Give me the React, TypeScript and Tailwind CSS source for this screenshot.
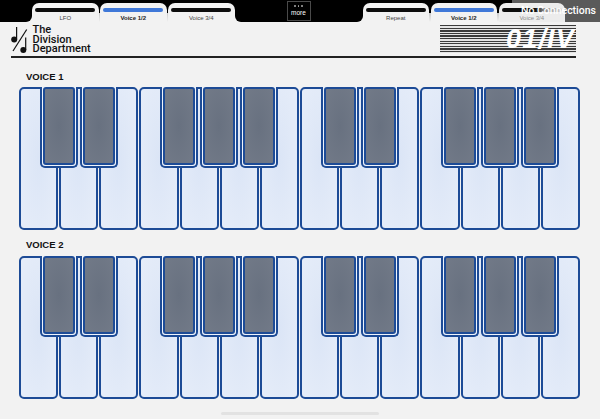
import React from 'react';

const leftTabs = [
  { id: 'lfo', label: 'LFO', active: false },
  { id: 'voice12', label: 'Voice 1/2', active: true },
  { id: 'voice34', label: 'Voice 3/4', active: false },
];

const rightTabs = [
  { id: 'repeat', label: 'Repeat', active: false },
  { id: 'voice12', label: 'Voice 1/2', active: true },
];

const blackKeys = [
  'left-[21px]',
  'left-[61px]',
  'left-[141px]',
  'left-[181px]',
  'left-[221px]',
  'left-[302px]',
  'left-[342px]',
  'left-[422px]',
  'left-[462px]',
  'left-[502px]',
];

const whiteKeys = Array.from({ length: 14 }, (_, i) => i);

const Tab = ({ label, active }: { label: string; active: boolean }) => (
  <div className="w-[66.5px] h-[19px] rounded-t-[7px] bg-[#f2f2f2] flex flex-col items-center pt-[5px]">
    <div className={`w-[60px] h-[3.5px] rounded-full ${active ? 'bg-[#3f78d8]' : 'bg-[#0c0c0c]'}`} />
    <span className={`mt-[2px] text-[6px] leading-[8px] ${active ? 'text-[#222] font-bold' : 'text-[#444]'}`}>{label}</span>
  </div>
);

const Keyboard = () => (
  <div className="relative h-[143px] flex gap-px">
    {whiteKeys.map((k) => (
      <div
        key={k}
        className="flex-1 rounded-[5px] border-2 border-[#1d4b96] bg-[radial-gradient(ellipse_at_center,#dbe5f6,#e6edf9)]"
      />
    ))}
    {blackKeys.map((pos) => (
      <div
        key={pos}
        className={`absolute top-0 ${pos} w-[38px] h-[81px] rounded-b-[5px] border-2 border-t-0 border-[#1d4b96] bg-[#eef3fb] px-px pb-px`}
      >
        <div className="h-full rounded-[3px] border-2 border-[#1d4b96] bg-[radial-gradient(ellipse_at_center,#687180,#727a88)]" />
      </div>
    ))}
  </div>
);

const App = () => {
  return (
    <div className="relative w-[600px] h-[419px] overflow-hidden bg-[#f2f2f2] font-['Liberation_Sans',sans-serif] flex flex-col">
      {/* Top bar */}
      <div className="h-[22px] flex shrink-0">
        <div className="w-[32px] bg-black rounded-br-[6px]" />
        <div className="flex gap-[1.5px] pt-[3px] bg-[linear-gradient(#000_60%,#c9c9c9_60%,#f2f2f2)]">
          {leftTabs.map((t) => (
            <Tab key={t.id} label={t.label} active={t.active} />
          ))}
        </div>
        <div className="w-[128px] bg-black rounded-b-[6px] flex justify-center pt-px">
          <div className="w-[24px] h-[20px] border border-[#4a4a4a] flex flex-col items-center pt-[3px]">
            <div className="flex gap-[2px]">
              <span className="w-[1.5px] h-[1.5px] rounded-full bg-[#aaa]" />
              <span className="w-[1.5px] h-[1.5px] rounded-full bg-[#aaa]" />
              <span className="w-[1.5px] h-[1.5px] rounded-full bg-[#aaa]" />
            </div>
            <span className="mt-[2px] text-[6.5px] leading-[8px] text-white">more</span>
          </div>
        </div>
        <div className="flex gap-[1.5px] pt-[3px] bg-[linear-gradient(#000_60%,#c9c9c9_60%,#f2f2f2)]">
          {rightTabs.map((t) => (
            <Tab key={t.id} label={t.label} active={t.active} />
          ))}
          <div className="relative z-20 w-[66.5px] h-[19px] rounded-t-[7px] bg-[#ececec] flex flex-col items-center pt-[5px]">
            <div className="w-[60px] h-[3.5px] rounded-full bg-[linear-gradient(90deg,#0c0c0c_55%,#8a8a8a_70%,#cfcfcf)]" />
            <span className="mt-[2px] text-[6px] leading-[8px] text-[#8d8d8d]">Voice 3/4</span>
          </div>
        </div>
        <div className="flex-1 bg-black rounded-bl-[6px]" />
      </div>

      {/* No connections toast */}
      <div className="absolute z-10 top-0 right-0 w-[88px] h-[22px] bg-[#5a5a5a]" />
      <div className="absolute z-30 top-0 right-[4px] h-[22px] flex items-center text-white text-[10.5px] font-medium font-['Roboto',sans-serif]">
        No Connections
      </div>

      {/* Brand row */}
      <div className="ml-[11px] mr-[24px] h-[36px] border-b-2 border-[#222] flex justify-between shrink-0">
        <div className="flex items-start pt-[3px]">
          <svg width="19" height="30" viewBox="0 0 19 30" className="mt-px">
            <ellipse cx="3.2" cy="13.6" rx="3" ry="3" fill="#111" />
            <path d="M5.6 1V13.4" stroke="#111" strokeWidth="1.2" />
            <path d="M15.7 3.5L2 25" stroke="#111" strokeWidth="1.2" />
            <ellipse cx="12.3" cy="24" rx="3" ry="3" fill="#111" />
            <path d="M14.7 11.5V24" stroke="#111" strokeWidth="1.2" />
          </svg>
          <div className="ml-[2.5px] font-['Roboto',sans-serif] font-medium text-[11px] leading-[9.5px] text-[#111]">
            The
            <br />
            Division
            <br />
            Department
          </div>
        </div>
        <div className="mt-[3px] w-[136px] h-[28px] flex items-center justify-end pr-[1px] bg-[repeating-linear-gradient(180deg,#3a3a3a_0_1.3px,#e4e4e4_1.3px_2.6px)]">
          <span className="text-white italic font-bold text-[27px] leading-none tracking-[1.2px]">01/IV</span>
        </div>
      </div>

      {/* Voices */}
      <div className="pl-[19px] pr-[20px]">
        <div className="mt-[13px] mb-[5px] pl-[7px] text-[9.5px] leading-[11px] font-bold text-[#111]">VOICE 1</div>
        <Keyboard />
        <div className="mt-[9px] mb-[6px] pl-[7px] text-[9.5px] leading-[11px] font-bold text-[#111]">VOICE 2</div>
        <Keyboard />
      </div>

      {/* Home indicator */}
      <div className="mt-auto mb-[4px] mx-auto w-[158px] h-[3px] rounded-full bg-[#e2e2e2]" />
    </div>
  );
};

export default App;
